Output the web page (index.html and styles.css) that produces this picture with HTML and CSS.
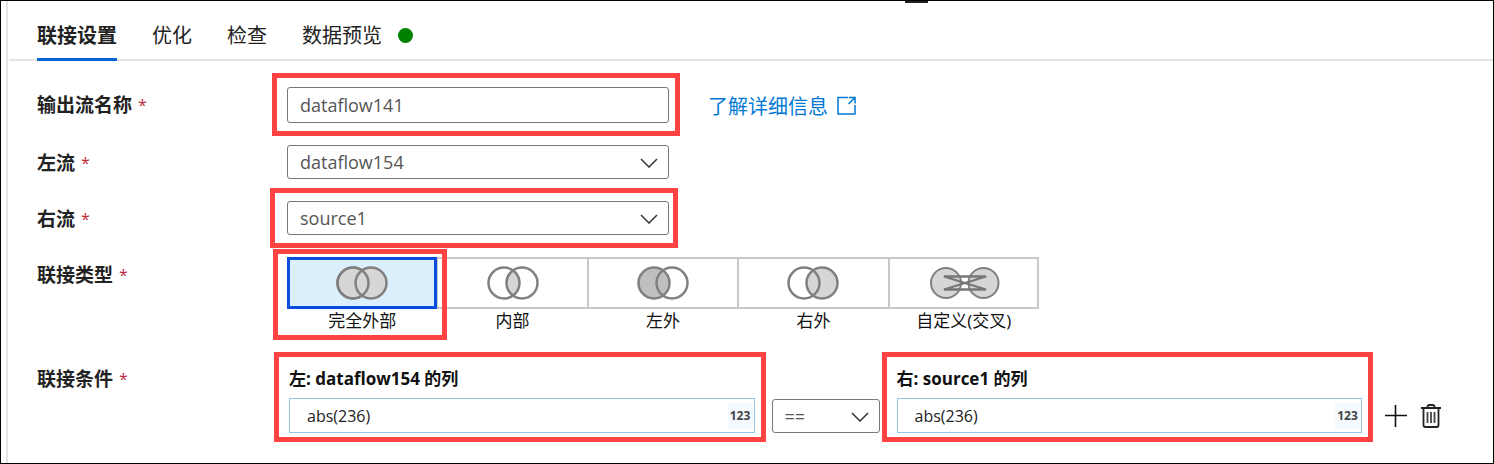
FILE: index.html
```html
<!DOCTYPE html>
<html lang="zh-CN">
<head>
<meta charset="utf-8">
<title>联接设置</title>
<link rel="stylesheet" href="styles.css">
</head>
<body>
<svg class="defs" aria-hidden="true">
  <symbol id="chevron" viewBox="0 0 18 10"><path d="M1 1l8 8 8-8" fill="none" stroke="#333" stroke-width="1.5"/></symbol>
</svg>
<div class="window">
  <span class="grip"></span>
  <main class="panel">
    <nav class="tabs" role="tablist">
      <button class="tab active" role="tab" aria-selected="true">联接设置</button>
      <button class="tab" role="tab">优化</button>
      <button class="tab" role="tab">检查</button>
      <button class="tab" role="tab">数据预览<span class="status"></span></button>
    </nav>
    <form class="form">
      <div class="row">
        <label class="name" for="out">输出流名称 <span class="req">*</span></label>
        <div class="field callout"><input class="box" id="out" type="text" value="dataflow141"></div>
        <a class="more" href="#">了解详细信息
          <svg width="19" height="19" viewBox="0 0 19 19" fill="none" stroke="currentColor" stroke-width="1.5"><path d="M11 1.500H1v16.500h17V9M12 1.500h6v6M18 1.500L11.500 8"/></svg>
        </a>
      </div>
      <div class="row">
        <label class="name" for="left">左流 <span class="req">*</span></label>
        <div class="field"><select class="box" id="left"><option>dataflow154</option></select><svg class="chevron"><use href="#chevron"/></svg></div>
      </div>
      <div class="row">
        <label class="name" for="right">右流 <span class="req">*</span></label>
        <div class="field callout stream"><select class="box" id="right"><option>source1</option></select><svg class="chevron"><use href="#chevron"/></svg></div>
      </div>
      <div class="row">
        <span class="name" id="jt">联接类型 <span class="req">*</span></span>
        <div class="joins" role="radiogroup" aria-labelledby="jt">
          <label class="join callout type"><input type="radio" name="join" checked>
            <span class="tile"><svg width="52" height="34" viewBox="0 0 52 34" fill="#d6d6d6" stroke="#808080" stroke-width="2.500"><circle cx="17" cy="17" r="15.500"/><circle cx="35" cy="17" r="15.500"/><circle cx="17" cy="17" r="15.500" fill="none"/></svg></span>
            <span class="caption">完全外部</span></label>
          <label class="join"><input type="radio" name="join">
            <span class="tile"><svg width="52" height="34" viewBox="0 0 52 34" fill="none" stroke="#808080" stroke-width="2.500"><path d="M26 4a15.500 15.500 0 0 1 0 26a15.500 15.500 0 0 1 0-26z" fill="#d6d6d6" stroke="none"/><circle cx="17" cy="17" r="15.500"/><circle cx="35" cy="17" r="15.500"/></svg></span>
            <span class="caption">内部</span></label>
          <label class="join"><input type="radio" name="join">
            <span class="tile"><svg width="52" height="34" viewBox="0 0 52 34" fill="none" stroke="#808080" stroke-width="2.500"><circle cx="17" cy="17" r="15.500" fill="#bfbfbf"/><circle cx="35" cy="17" r="15.500"/></svg></span>
            <span class="caption">左外</span></label>
          <label class="join"><input type="radio" name="join">
            <span class="tile"><svg width="52" height="34" viewBox="0 0 52 34" fill="none" stroke="#808080" stroke-width="2.500"><circle cx="35" cy="17" r="15.500" fill="#d6d6d6"/><circle cx="17" cy="17" r="15.500"/></svg></span>
            <span class="caption">右外</span></label>
          <label class="join"><input type="radio" name="join">
            <span class="tile"><svg width="74" height="34" viewBox="-4 0 74 34" fill="none" stroke="#808080" stroke-width="2"><circle cx="16" cy="17" r="15" fill="#d6d6d6"/><circle cx="53.500" cy="17" r="15" fill="#d6d6d6"/><path d="M14 10.500H56L14 23.500H56z" stroke="#777" stroke-width="2.300"/></svg></span>
            <span class="caption">自定义(交叉)</span></label>
        </div>
      </div>
      <div class="row conditions">
        <span class="name">联接条件 <span class="req">*</span></span>
        <div class="condition">
          <div class="side callout expr">
            <label class="heading" for="le">左: dataflow154 的列</label>
            <div class="expression"><input id="le" type="text" value="abs(236)"><span class="kind">123</span></div>
          </div>
          <div class="field operator"><select class="box" aria-label="运算符"><option>==</option></select><svg class="chevron"><use href="#chevron"/></svg></div>
          <div class="side callout expr">
            <label class="heading" for="re">右: source1 的列</label>
            <div class="expression"><input id="re" type="text" value="abs(236)"><span class="kind">123</span></div>
          </div>
          <div class="actions">
            <button type="button" aria-label="添加"><svg width="22" height="22" viewBox="0 0 22 22" fill="none" stroke="#111" stroke-width="1.600"><path d="M10.500 0v22M0 10.500h22"/></svg></button>
            <button type="button" aria-label="删除"><svg width="20" height="24" viewBox="0 0 20 24" fill="none" stroke="#222" stroke-width="1.800"><path d="M0 4h20M6.500 4V3q0-2 2-2h3q2 0 2 2v1M2.500 4v17q0 2 2 2h11q2 0 2-2V4"/><path d="M6.500 8v11M10 8v11M13.500 8v11" stroke="#444"/></svg></button>
          </div>
        </div>
      </div>
    </form>
  </main>
</div>
</body>
</html>
```
FILE: styles.css
```css
* { box-sizing: border-box; }
body { margin: 0; background: #fff; color: #222; font-family: "Open Sans", "Noto Sans CJK SC", sans-serif; font-size: 18px; }
button, input, select { font: inherit; color: inherit; }
button { border: 0; padding: 0; background: none; }
svg { display: block; flex: none; }
.defs { position: absolute; width: 0; height: 0; }
.window { position: relative; display: flex; min-height: 100vh; padding-left: 5px; border: 1px solid #000; }
.grip { position: absolute; top: 0; left: calc(50% + 158px); width: 23px; height: 2px; background: #222; }
.panel { flex: 1; min-width: 0; border-left: 2px solid #e4e4e4; padding-left: 1px; }

.tabs { display: flex; gap: 35px; height: 60px; padding: 12px 28px 0; border-bottom: 2px solid #e5e5e5; }
.tab { display: flex; align-items: center; gap: 16px; margin-bottom: -2px; border-bottom: 3px solid transparent; font-size: 20px; line-height: 28px; white-space: nowrap; }
.tab.active { border-color: #0a64d2; font-weight: 700; }
.status { width: 15px; height: 15px; border-radius: 50%; background: #008000; }

.form { display: flex; flex-direction: column; gap: 22px; padding: 26px 52px 24px 28px; }
.row { display: grid; grid-template-columns: 250px minmax(0, 382px) 1fr; }
.name { display: flex; gap: 6px; height: 34px; font-size: 19px; font-weight: 700; line-height: 36px; }
.req { color: #c0283c; font-size: 16px; font-weight: 400; }
.field { position: relative; }
.box { display: block; width: 100%; height: 34px; padding: 0 12px; border: 1px solid #777; border-radius: 3px; background: #fff; color: #555; appearance: none; outline: 0; }
input.box { height: 36px; }
.chevron { position: absolute; top: 13px; right: 11px; width: 18px; height: 10px; pointer-events: none; }
.more { display: flex; align-items: center; gap: 9px; padding-left: 39px; color: #0078d4; font-size: 20px; text-decoration: none; }

/* red emphasis frames lie over the controls they surround */
.callout { position: relative; }
.callout::after { content: ""; position: absolute; inset: -14px -11px -13px -15px; border: 5px solid #ff4343; pointer-events: none; z-index: 1; }
.stream::after { inset: -13px -9px -13px -17px; }
.type::after { inset: -8px -10px -7px -14px; }
.expr::after { inset: -9px -11px -9px -15px; }

.joins { grid-column: 2 / -1; display: grid; grid-template-columns: repeat(5, 1fr); max-width: 752px; }
.join { position: relative; }
.join input { position: absolute; opacity: 0; }
.tile { display: flex; align-items: center; justify-content: center; height: 52px; border: 1px solid #c8c8c8; border-width: 2px 1px; }
.join:last-child .tile { border-right-width: 2px; }
.join input:checked + .tile { border: 3px solid #0a4edb; background: #dceffd; }
.caption { display: block; height: 24px; color: #111; font-size: 17px; line-height: 24px; text-align: center; }

.conditions { padding-top: 6px; }
.condition { grid-column: 2 / -1; display: grid; grid-template-columns: 1fr 108px 1fr auto; gap: 17px; align-items: end; padding-left: 2px; }
.side { min-width: 0; }
.heading { display: block; height: 37px; color: #111; font-size: 17px; font-weight: 700; line-height: 36px; }
.expression { display: flex; align-items: center; height: 35px; padding-right: 1px; border: 1px solid #98c4e6; }
.expression input { flex: 1; min-width: 0; height: 33px; border: 0; padding: 0 17px; color: #222; font-size: 16px; outline: 0; }
.kind { width: 25px; background: #f3f9fe; color: #444; font-size: 12px; font-weight: 700; line-height: 26px; text-align: center; }
.actions { display: flex; align-items: center; gap: 14px; height: 35px; padding-left: 6px; }
```
